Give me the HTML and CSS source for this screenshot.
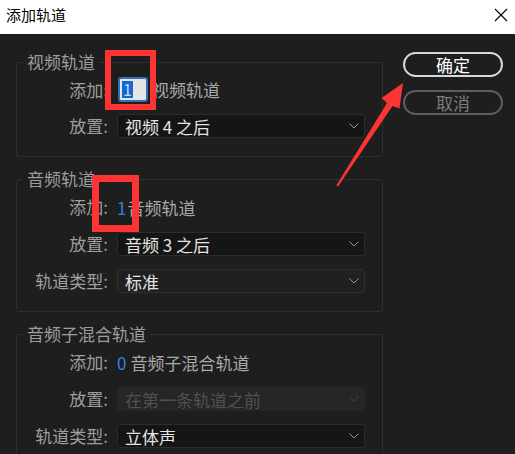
FILE: index.html
```html
<!DOCTYPE html>
<html lang="zh">
<head>
<meta charset="utf-8">
<title>添加轨道</title>
<link rel="stylesheet" href="styles.css">
</head>
<body>
<div class="titlebar">
  <span class="title">添加轨道</span>
  <svg class="close" width="14" height="14" viewBox="0 0 14 14"><path d="M1 1L13 13M13 1L1 13" stroke="#000" stroke-width="1.1" fill="none"/></svg>
</div>
<div class="dialog">
  <div class="groups">
    <fieldset class="group g-video">
      <legend>视频轨道</legend>
      <div class="grid">
        <span class="lbl">添加:</span>
        <div class="add"><span class="spin"><span class="sel">1</span></span><span class="val v-video">视频轨道</span></div>
        <span class="lbl">放置:</span>
        <div class="select"><span>视频 4 之后</span><svg class="chev" width="10" height="6" viewBox="0 0 10 6"><path d="M0.5 0.5L5 5L9.5 0.5" stroke="#9a9a9a" fill="none"/></svg></div>
      </div>
    </fieldset>
    <fieldset class="group g-audio">
      <legend>音频轨道</legend>
      <div class="grid">
        <span class="lbl">添加:</span>
        <div class="add"><span class="num">1</span><span class="val v-audio">音频轨道</span></div>
        <span class="lbl">放置:</span>
        <div class="select"><span>音频 3 之后</span><svg class="chev" width="10" height="6" viewBox="0 0 10 6"><path d="M0.5 0.5L5 5L9.5 0.5" stroke="#9a9a9a" fill="none"/></svg></div>
        <span class="lbl">轨道类型:</span>
        <div class="select soft"><span>标准</span><svg class="chev" width="10" height="6" viewBox="0 0 10 6"><path d="M0.5 0.5L5 5L9.5 0.5" stroke="#9a9a9a" fill="none"/></svg></div>
      </div>
    </fieldset>
    <fieldset class="group g-submix">
      <legend>音频子混合轨道</legend>
      <div class="grid">
        <span class="lbl">添加:</span>
        <div class="add"><span class="num">0</span><span class="val v-submix">音频子混合轨道</span></div>
        <span class="lbl">放置:</span>
        <div class="select disabled"><span>在第一条轨道之前</span><svg class="chev" width="10" height="6" viewBox="0 0 10 6"><path d="M0.5 0.5L5 5L9.5 0.5" stroke="#444" fill="none"/></svg></div>
        <span class="lbl">轨道类型:</span>
        <div class="select"><span>立体声</span><svg class="chev" width="10" height="6" viewBox="0 0 10 6"><path d="M0.5 0.5L5 5L9.5 0.5" stroke="#9a9a9a" fill="none"/></svg></div>
      </div>
    </fieldset>
  </div>
  <div class="buttons">
    <button class="btn primary">确定</button>
    <button class="btn">取消</button>
  </div>
</div>
<div class="mark mark-video"></div>
<div class="mark mark-audio"></div>
<svg class="arrow" width="515" height="454" viewBox="0 0 515 454">
  <polygon points="403,83 399.5,108.5 392.5,106 338,186.5 336.3,185.6 387,103 381.5,98" fill="#fb3434"/>
</svg>
</body>
</html>
```
FILE: styles.css
```css
html, body {
  margin: 0;
  padding: 0;
}
body {
  width: 515px;
  height: 454px;
  overflow: hidden;
  background: #1e1e1e;
  font-family: "Noto Sans CJK SC", "Noto Sans", sans-serif;
  position: relative;
}
.titlebar {
  height: 34px;
  background: #ffffff;
  display: flex;
  align-items: flex-start;
  justify-content: space-between;
}
.title {
  font-size: 15px;
  line-height: 20px;
  color: #000;
  margin: 5px 0 0 6px;
}
.close {
  margin: 8px 7px 0 0;
}
.dialog {
  display: flex;
  gap: 20px;
  padding: 18px 0 0 16px;
}
.groups {
  width: 367px;
  display: flex;
  flex-direction: column;
  gap: 12px;
}
.group {
  margin: 0;
  min-width: 0;
  border: 1px solid #2f2f2f;
  border-radius: 3px;
  padding: 6px 17px 18px 6px;
}
.group legend {
  margin: 0;
  padding: 0 4px;
  font-size: 17px;
  line-height: 20px;
  color: #9c9c9c;
}
.g-video { padding-top: 5px; }
.grid {
  display: grid;
  grid-template-columns: 85px 1fr;
  column-gap: 9px;
  row-gap: 13px;
  align-items: center;
}
.g-video .grid { row-gap: 12px; }
.lbl {
  text-align: right;
  font-size: 17px;
  line-height: 24px;
  color: #9e9e9e;
}
.add {
  display: flex;
  align-items: center;
  height: 24px;
  font-size: 17px;
  color: #a8a8a8;
}
.g-video .add { height: 25px; }
.spin {
  box-sizing: border-box;
  width: 30px;
  height: 25px;
  margin-left: 1px;
  background: #e6e6e6;
  border: 2px solid #346fb4;
  border-radius: 3px;
  display: flex;
  align-items: center;
  padding-left: 2px;
}
.sel {
  background: #1766cf;
  color: #bcdcff;
  font-size: 16px;
  line-height: 17px;
  padding: 0 1px;
}
.val {
  margin-left: 4px;
}
.v-video { margin-left: 4px; }
.v-audio { margin-left: 1px; }
.v-submix { margin-left: 4px; }
.num {
  color: #2f84e6;
  font-size: 17px;
}
.select {
  box-sizing: border-box;
  height: 24px;
  background: #151515;
  border: 1px solid #2c2c2c;
  border-radius: 3px;
  display: flex;
  align-items: center;
  justify-content: space-between;
  padding: 0 5px 0 7px;
  font-size: 17px;
  color: #e4e4e4;
}
.select.soft {
  background: #202020;
  border-color: #303030;
}
.select.disabled {
  background: #262626;
  border-color: #262626;
  color: #515151;
}
.buttons {
  display: flex;
  flex-direction: column;
  gap: 13px;
  width: 100px;
}
.btn {
  box-sizing: border-box;
  width: 100px;
  height: 25px;
  border-radius: 13px;
  background: transparent;
  border: 2px solid #5e5e5e;
  color: #7c7c7c;
  font-family: "Noto Sans CJK SC", "Noto Sans", sans-serif;
  font-size: 17px;
  line-height: 19px;
  padding: 0;
}
.btn.primary {
  border-color: #d8d8d8;
  color: #ffffff;
}
.mark {
  position: absolute;
  box-sizing: border-box;
  border: 6px solid #fc3434;
}
.mark-video {
  left: 105px;
  top: 50px;
  width: 51px;
  height: 60px;
}
.mark-audio {
  left: 92px;
  top: 175px;
  width: 47px;
  height: 57px;
  border-width: 7px;
}
.arrow {
  position: absolute;
  left: 0;
  top: 0;
  pointer-events: none;
}
```
